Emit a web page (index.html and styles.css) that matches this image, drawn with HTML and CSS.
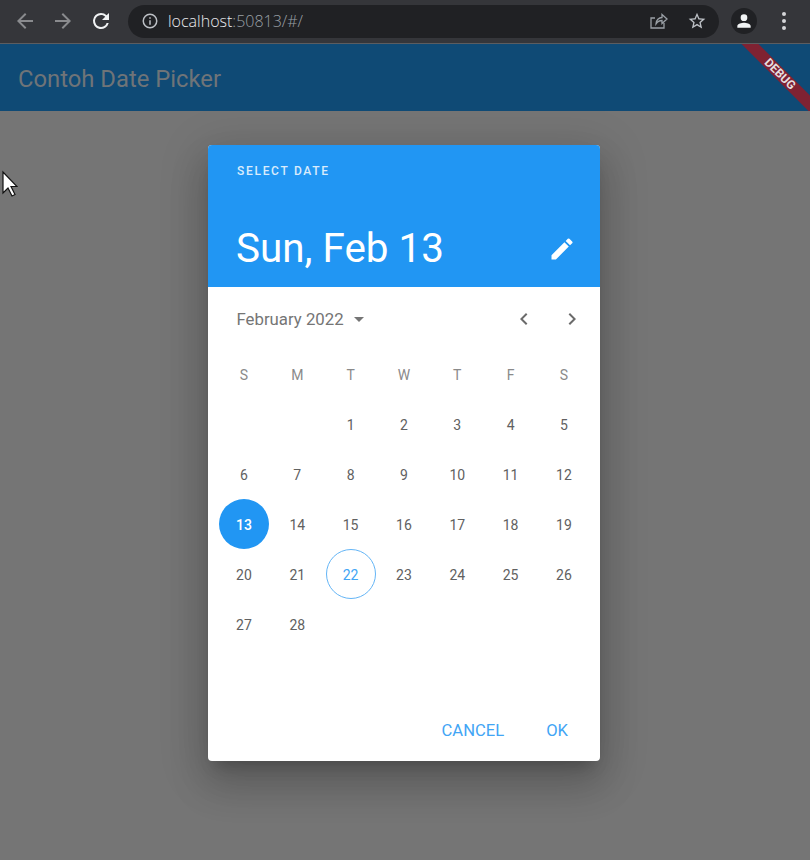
FILE: index.html
```html
<!DOCTYPE html>
<html lang="en">
<head>
  <meta charset="UTF-8" />
  <title>Contoh Date Picker</title>
  <link rel="stylesheet" href="styles.css">
</head>
<body>
  <!-- Browser toolbar -->
  <div class="toolbar">
    <svg class="nav-icon dim" viewBox="0 0 24 24"><path d="M20 11H7.8l5.6-5.6L12 4l-8 8 8 8 1.4-1.4L7.8 13H20z"/></svg>
    <svg class="nav-icon dim" viewBox="0 0 24 24"><path d="M4 11h12.2l-5.6-5.6L12 4l8 8-8 8-1.4-1.4 5.6-5.6H4z"/></svg>
    <svg class="nav-icon" viewBox="0 0 24 24"><path d="M17.65 6.35A7.96 7.96 0 0 0 12 4a8 8 0 1 0 7.73 10h-2.08A6 6 0 1 1 12 6c1.66 0 3.14.69 4.22 1.78L13 11h7V4z"/></svg>
    <div class="omnibox">
      <svg class="info-icon" viewBox="0 0 24 24"><path d="M11 7h2v2h-2zm0 4h2v6h-2zm1-9a10 10 0 1 0 0 20 10 10 0 0 0 0-20zm0 18a8 8 0 1 1 0-16 8 8 0 0 1 0 16z"/></svg>
      <span class="url">localhost<span class="url-dim">:50813/#/</span></span>
      <svg class="share-icon" viewBox="0 0 20 20"><path d="M16 12v5H3V7h4M8 13c0-4 3-6.500 6-6.500V3.500l5 4.500-5 4.500V9.500c-2.500 0-4.500 1-6 3.500z"/></svg>
      <svg class="star-icon" viewBox="0 0 24 24"><path d="M22 9.240l-7.190-.62L12 2 9.190 8.630 2 9.240l5.460 4.730L5.820 21 12 17.270 18.180 21l-1.630-7.030L22 9.240zM12 15.400l-3.760 2.270 1-4.280-3.320-2.880 4.380-.38L12 6.100l1.710 4.040 4.380.38-3.320 2.880 1 4.280L12 15.400z"/></svg>
    </div>
    <div class="avatar">
      <svg viewBox="0 0 24 24"><path d="M12 12a4 4 0 1 0 0-8 4 4 0 0 0 0 8zm0 2c-2.700 0-8 1.300-8 4v2h16v-2c0-2.700-5.300-4-8-4z"/></svg>
    </div>
    <div class="menu-dots"><span></span><span></span><span></span></div>
  </div>

  <!-- App bar -->
  <div class="appbar">
    Contoh Date Picker
    <div class="debug-banner">DEBUG</div>
  </div>

  <div class="scrim">
    <div class="dialog">
      <div class="dialog-head">
        <div class="help-text">SELECT DATE</div>
        <div class="head-row">
          <div class="date-title">Sun, Feb 13</div>
          <svg class="edit-icon" viewBox="0 0 24 24"><path d="M3 17.250V21h3.750L17.810 9.940l-3.750-3.750L3 17.250zM20.710 7.040a1 1 0 0 0 0-1.410l-2.340-2.340a1 1 0 0 0-1.410 0l-1.830 1.830 3.750 3.750 1.830-1.830z"/></svg>
        </div>
      </div>

      <div class="month-row">
        <span class="month-label">February 2022</span>
        <span class="caret"></span>
        <svg class="chev chev-prev" viewBox="0 0 24 24"><path d="M15.410 7.410L14 6l-6 6 6 6 1.410-1.410L10.830 12z"/></svg>
        <svg class="chev chev-next" viewBox="0 0 24 24"><path d="M10 6L8.590 7.410 13.170 12l-4.580 4.590L10 18l6-6z"/></svg>
      </div>

      <div class="calendar">
        <div class="dow">S</div><div class="dow">M</div><div class="dow">T</div><div class="dow">W</div><div class="dow">T</div><div class="dow">F</div><div class="dow">S</div>
        <div></div><div></div><div class="day">1</div><div class="day">2</div><div class="day">3</div><div class="day">4</div><div class="day">5</div>
        <div class="day">6</div><div class="day">7</div><div class="day">8</div><div class="day">9</div><div class="day">10</div><div class="day">11</div><div class="day">12</div>
        <div class="day"><span class="selected">13</span></div><div class="day">14</div><div class="day">15</div><div class="day">16</div><div class="day">17</div><div class="day">18</div><div class="day">19</div>
        <div class="day">20</div><div class="day">21</div><div class="day"><span class="today">22</span></div><div class="day">23</div><div class="day">24</div><div class="day">25</div><div class="day">26</div>
        <div class="day">27</div><div class="day">28</div>
      </div>

      <div class="actions">
        <span class="action">CANCEL</span>
        <span class="action">OK</span>
      </div>
    </div>
  </div>

  <!-- Mouse pointer from the capture -->
  <svg class="pointer" width="18" height="28" viewBox="0 0 18 28"><path d="M3 2v21l5-5 4 8 3-1.500-4-8h6z" fill="#fff" stroke="#111" stroke-width="1.200"/></svg>
</body>
</html>
```

FILE: styles.css
```css
* {
  box-sizing: border-box;
}

html, body {
  height: 100%;
}

body {
  margin: 0;
  display: flex;
  flex-direction: column;
  overflow: hidden;
  font-family: Roboto, "Liberation Sans", sans-serif;
  background: #757575;
}

.toolbar {
  height: 44px;
  flex-shrink: 0;
  display: flex;
  align-items: center;
  padding: 0 0 1px 13px;
  background: #35363a;
  border-bottom: 1px solid #5c5d60;
}

.nav-icon {
  width: 24px;
  height: 24px;
  margin-right: 14px;
  fill: #f1f3f4;
}

.nav-icon.dim {
  fill: #8a8b8e;
}

.omnibox {
  width: 591px;
  height: 33px;
  margin-left: 1px;
  display: flex;
  align-items: center;
  padding: 0 12px 0 13px;
  border-radius: 17px;
  background: #202124;
}

.info-icon {
  width: 18px;
  height: 18px;
  fill: #bdc1c6;
}

.url {
  margin-left: 9px;
  font-family: "Open Sans", sans-serif;
  font-size: 16px;
  font-weight: 300;
  color: #e8eaed;
  flex: 1;
}

.url-dim {
  color: #9aa0a6;
}

.share-icon {
  width: 20px;
  height: 20px;
  margin-right: 19px;
  fill: none;
  stroke: #9aa0a6;
  stroke-width: 1.300;
}

.star-icon {
  width: 20px;
  height: 20px;
  fill: #bdc1c6;
}

.avatar {
  width: 26px;
  height: 26px;
  margin-left: 12px;
  border-radius: 50%;
  background: #202124;
  display: flex;
  align-items: center;
  justify-content: center;
}

.avatar svg {
  width: 20px;
  height: 20px;
  fill: #f1f3f4;
}

.menu-dots {
  margin-left: 25px;
  display: flex;
  flex-direction: column;
  gap: 3px;
}

.menu-dots span {
  width: 4px;
  height: 4px;
  border-radius: 50%;
  background: #d5d6d8;
}

.appbar {
  position: relative;
  height: 67px;
  flex-shrink: 0;
  padding: 22px 0 0 18px;
  overflow: hidden;
  background: #0f4a75;
  font-size: 23.800px;
  line-height: 27px;
  color: #6f7478;
}

.debug-banner {
  position: absolute;
  top: 24px;
  left: 720px;
  width: 120px;
  height: 12px;
  transform: rotate(45deg);
  background: #7f2232;
  color: #e6dfe0;
  font-size: 12px;
  font-weight: 700;
  line-height: 12px;
  text-align: center;
}

.scrim {
  flex: 1;
  padding: 34px 0 0 208px;
}

.dialog {
  width: 392px;
  height: 616px;
  display: flex;
  flex-direction: column;
  border-radius: 4px;
  overflow: hidden;
  background: #fff;
  box-shadow: 0 11px 15px -7px rgba(0, 0, 0, 0.2), 0 24px 38px 3px rgba(0, 0, 0, 0.14), 0 9px 46px 8px rgba(0, 0, 0, 0.12);
}

.dialog-head {
  height: 142px;
  padding: 19px 24px 0 29px;
  background: #2196f3;
  color: #fff;
}

.help-text {
  font-size: 12px;
  font-weight: 500;
  line-height: 14px;
  letter-spacing: 1.700px;
  color: #d9ecfc;
}

.head-row {
  margin-top: 47px;
  display: flex;
  align-items: center;
  justify-content: space-between;
}

.date-title {
  font-size: 40.400px;
  line-height: 48px;
  margin-left: -1px;
}

.edit-icon {
  width: 28px;
  height: 28px;
  fill: #fff;
}

.month-row {
  height: 64px;
  display: flex;
  align-items: center;
  padding-left: 28.500px;
}

.month-label {
  font-size: 16.800px;
  color: #757575;
}

.caret {
  margin-left: 10px;
  border-left: 5.500px solid transparent;
  border-right: 5.500px solid transparent;
  border-top: 5.500px solid #757575;
}

.chev {
  width: 24px;
  height: 24px;
  fill: #6b6b6b;
}

.chev-prev {
  margin-left: auto;
}

.chev-next {
  margin: 0 16px 0 24px;
}

.calendar {
  display: grid;
  grid-template-columns: repeat(7, 53.330px);
  grid-auto-rows: 50px;
  height: 300px;
  padding-left: 9.300px;
  margin-top: -2px;
}

.dow, .day {
  display: flex;
  align-items: center;
  justify-content: center;
  padding-top: 2px;
  font-size: 14px;
}

.dow {
  color: #8a8a8a;
}

.day {
  color: #616161;
}

.selected, .today {
  width: 50px;
  height: 50px;
  margin-top: -2px;
  padding-top: 2px;
  display: flex;
  align-items: center;
  justify-content: center;
  border-radius: 50%;
}

.selected {
  background: #2196f3;
  color: #fff;
  font-weight: 500;
}

.today {
  border: 1.500px solid #64b5f6;
  color: #42a5f5;
}

.actions {
  margin-top: auto;
  display: flex;
  justify-content: flex-end;
  gap: 42px;
  padding: 0 32px 20px 0;
  line-height: 20px;
}

.action {
  font-size: 16.600px;
  color: #42a5f5;
}

.pointer {
  position: absolute;
  top: 170px;
  left: 0;
}
```
